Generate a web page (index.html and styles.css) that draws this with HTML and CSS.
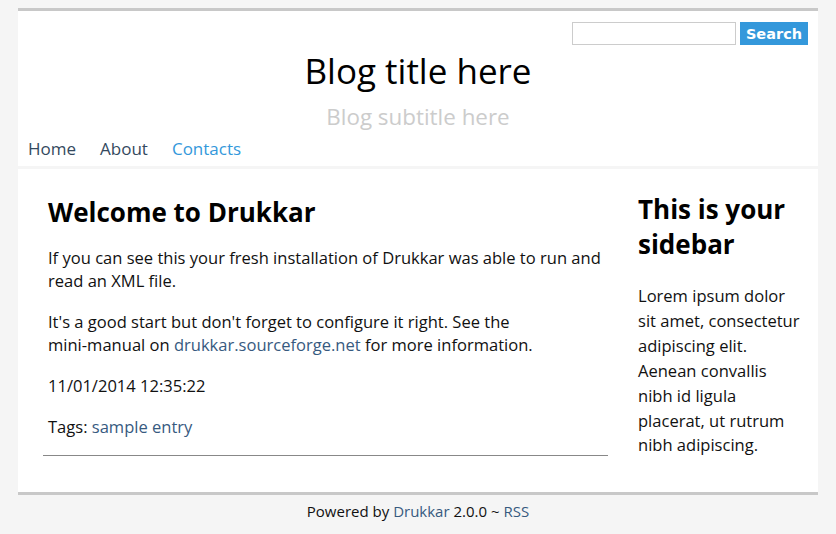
FILE: index.html
```html
<!DOCTYPE html>
<html>
<head>
<meta charset="utf-8">
<title>Drukkar</title>
<link rel="stylesheet" href="styles.css">
</head>
<body>
<div class="wrap">
  <div class="header">
    <form class="search">
      <input type="text" class="search-input">
      <button type="button" class="search-btn">Search</button>
    </form>
    <h1 class="title">Blog title here</h1>
    <div class="subtitle">Blog subtitle here</div>
    <nav class="nav">
      <a href="#" class="nav-link">Home</a>
      <a href="#" class="nav-link">About</a>
      <a href="#" class="nav-link nav-active">Contacts</a>
    </nav>
  </div>
  <div class="content">
    <div class="main">
      <div class="entry">
        <h2 class="entry-title">Welcome to Drukkar</h2>
        <p class="para">If you can see this your fresh installation of Drukkar was able to run and read an XML file.</p>
        <p class="para">It's a good start but don't forget to configure it right. See the <span class="nowrap">mini-manual</span> on <a href="#" class="link">drukkar.sourceforge.net</a> for more information.</p>
        <p class="para">11/01/2014 12:35:22</p>
        <p class="para">Tags: <a href="#" class="link">sample entry</a></p>
      </div>
      <hr class="rule">
    </div>
    <div class="sidebar">
      <h2 class="side-title">This is your sidebar</h2>
      <p class="side-text">Lorem ipsum dolor sit amet, consectetur adipiscing elit. Aenean convallis nibh id ligula placerat, ut rutrum nibh adipiscing.</p>
    </div>
  </div>
  <div class="footer">Powered by <a href="#" class="link">Drukkar</a> 2.0.0 ~ <a href="#" class="link">RSS</a></div>
</div>
</body>
</html>
```
FILE: styles.css
```css
html, body {
  margin: 0;
  padding: 0;
}
body {
  background: #f5f5f5;
  font-family: "Open Sans", "DejaVu Sans", sans-serif;
  color: #111;
}
.wrap {
  width: 800px;
  margin: 8px auto 0;
}
.header {
  background: #fff;
  border-top: 3px solid #c8c8c8;
  padding: 11px 10px 0 10px;
  height: 144px;
  box-sizing: content-box;
}
.search {
  display: flex;
  justify-content: flex-end;
  gap: 4px;
  margin: 0;
}
.search-input {
  width: 162px;
  height: 21px;
  border: 1px solid #ccc;
  padding: 0;
  margin: 0;
}
.search-btn {
  background: #3498db;
  color: #fff;
  border: 0;
  font-family: "DejaVu Sans", sans-serif;
  font-weight: bold;
  font-size: 14.5px;
  height: 23px;
  width: 68px;
  padding: 0;
  margin: 0;
}
.title {
  margin: 2px 0 0;
  font-weight: normal;
  font-size: 35px;
  line-height: 48px;
  text-align: center;
  color: #000;
}
.subtitle {
  text-align: center;
  font-size: 22.4px;
  line-height: 30px;
  color: #ccc;
  margin-top: 7px;
}
.nav {
  display: flex;
  gap: 24px;
  margin-top: 5px;
  padding-left: 0;
}
.nav-link {
  font-size: 17px;
  line-height: 24px;
  color: #34495e;
  text-decoration: none;
}
.nav-active {
  color: #3498db;
}
.content {
  margin-top: 3px;
  background: #fff;
  border-bottom: 3px solid #c8c8c8;
  display: flex;
  height: 323px;
}
.main {
  width: 565px;
  margin-left: 25px;
  padding-top: 26px;
}
.entry {
  padding: 0 5px;
}
.entry-title {
  font-size: 26px;
  line-height: 35px;
  margin: 0 0 16px;
  font-weight: bold;
  color: #000;
}
.para {
  font-size: 16.55px;
  line-height: 23px;
  margin: 0 0 18px;
}
.nowrap {
  white-space: nowrap;
}
.rule {
  border: 0;
  border-top: 1px solid #888;
  margin: -1px 0 0;
}
.sidebar {
  margin-left: 30px;
  width: 164px;
  padding-top: 23px;
}
.side-title {
  font-size: 26px;
  line-height: 35px;
  margin: 0 0 22px;
  font-weight: bold;
  color: #000;
}
.side-text {
  font-size: 16.55px;
  line-height: 24.9px;
  margin: 0;
}
.link {
  color: #375a7f;
  text-decoration: none;
}
.footer {
  text-align: center;
  font-size: 15px;
  line-height: 20px;
  padding-top: 6px;
}
```
